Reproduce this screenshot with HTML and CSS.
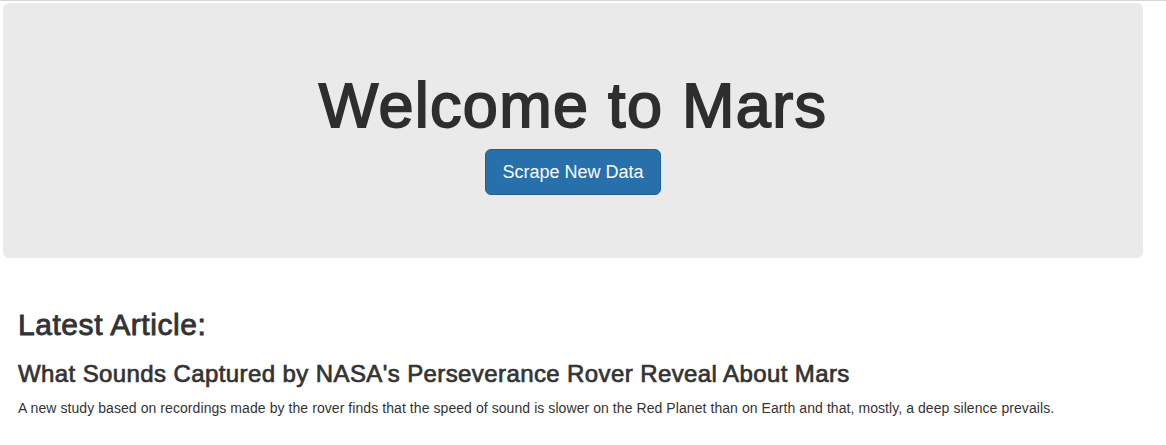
FILE: index.html
```html
<!DOCTYPE html>
<html lang="en">
<head>
<meta charset="utf-8">
<title>Mission to Mars</title>
<link rel="stylesheet" href="styles.css">
</head>
<body>
<div class="topline"></div>
<div class="container">
  <div class="jumbotron">
    <h1 class="title">Welcome to Mars</h1>
    <div class="actions">
      <a class="btn-primary" href="#">Scrape New Data</a>
    </div>
  </div>
  <section class="article">
    <h2 class="section-title">Latest Article:</h2>
    <h3 class="news-title">What Sounds Captured by NASA's Perseverance Rover Reveal About Mars</h3>
    <p class="news-text">A new study based on recordings made by the rover finds that the speed of sound is slower on the Red Planet than on Earth and that, mostly, a deep silence prevails.</p>
  </section>
</div>
</body>
</html>
```
FILE: styles.css
```css
html, body {
  margin: 0;
  padding: 0;
  background: #ffffff;
}

body {
  font-family: "Liberation Sans", Arial, Helvetica, sans-serif;
  font-size: 14px;
  line-height: 20px;
  color: #333333;
}

.topline {
  height: 1px;
  background: #d6d6d6;
}

.container {
  width: 1140px;
  margin: 2px 0 0 3px;
}

.jumbotron {
  background: #eaeaea;
  border-radius: 6px;
  padding: 48px 0;
  display: flex;
  flex-direction: column;
  align-items: center;
}

.title {
  font-size: 63px;
  line-height: 1.1;
  font-weight: 400;
  letter-spacing: 1.3px;
  margin: 20px 0 9px;
  color: #2e2e2e;
  -webkit-text-stroke: 1.8px #2e2e2e;
}

.actions {
  margin-bottom: 15px;
}

.btn-primary {
  display: block;
  box-sizing: border-box;
  height: 46px;
  padding: 10px 16px;
  font-size: 18px;
  line-height: 24px;
  color: #ffffff;
  background: #2870ab;
  border: 1px solid #245f93;
  border-radius: 6px;
  text-decoration: none;
}

.article {
  padding: 30px 15px 0;
}

.section-title {
  font-size: 30px;
  line-height: 1.1;
  font-weight: 400;
  letter-spacing: 0.55px;
  margin: 20px 0 10px;
  -webkit-text-stroke: 0.9px #333333;
}

.news-title {
  font-size: 24px;
  line-height: 1.1;
  font-weight: 400;
  letter-spacing: 0.4px;
  margin: 20px 0 10px;
  -webkit-text-stroke: 0.7px #333333;
}

.news-text {
  font-size: 14px;
  line-height: 20px;
  margin: 0;
  letter-spacing: 0.07px;
}
```
